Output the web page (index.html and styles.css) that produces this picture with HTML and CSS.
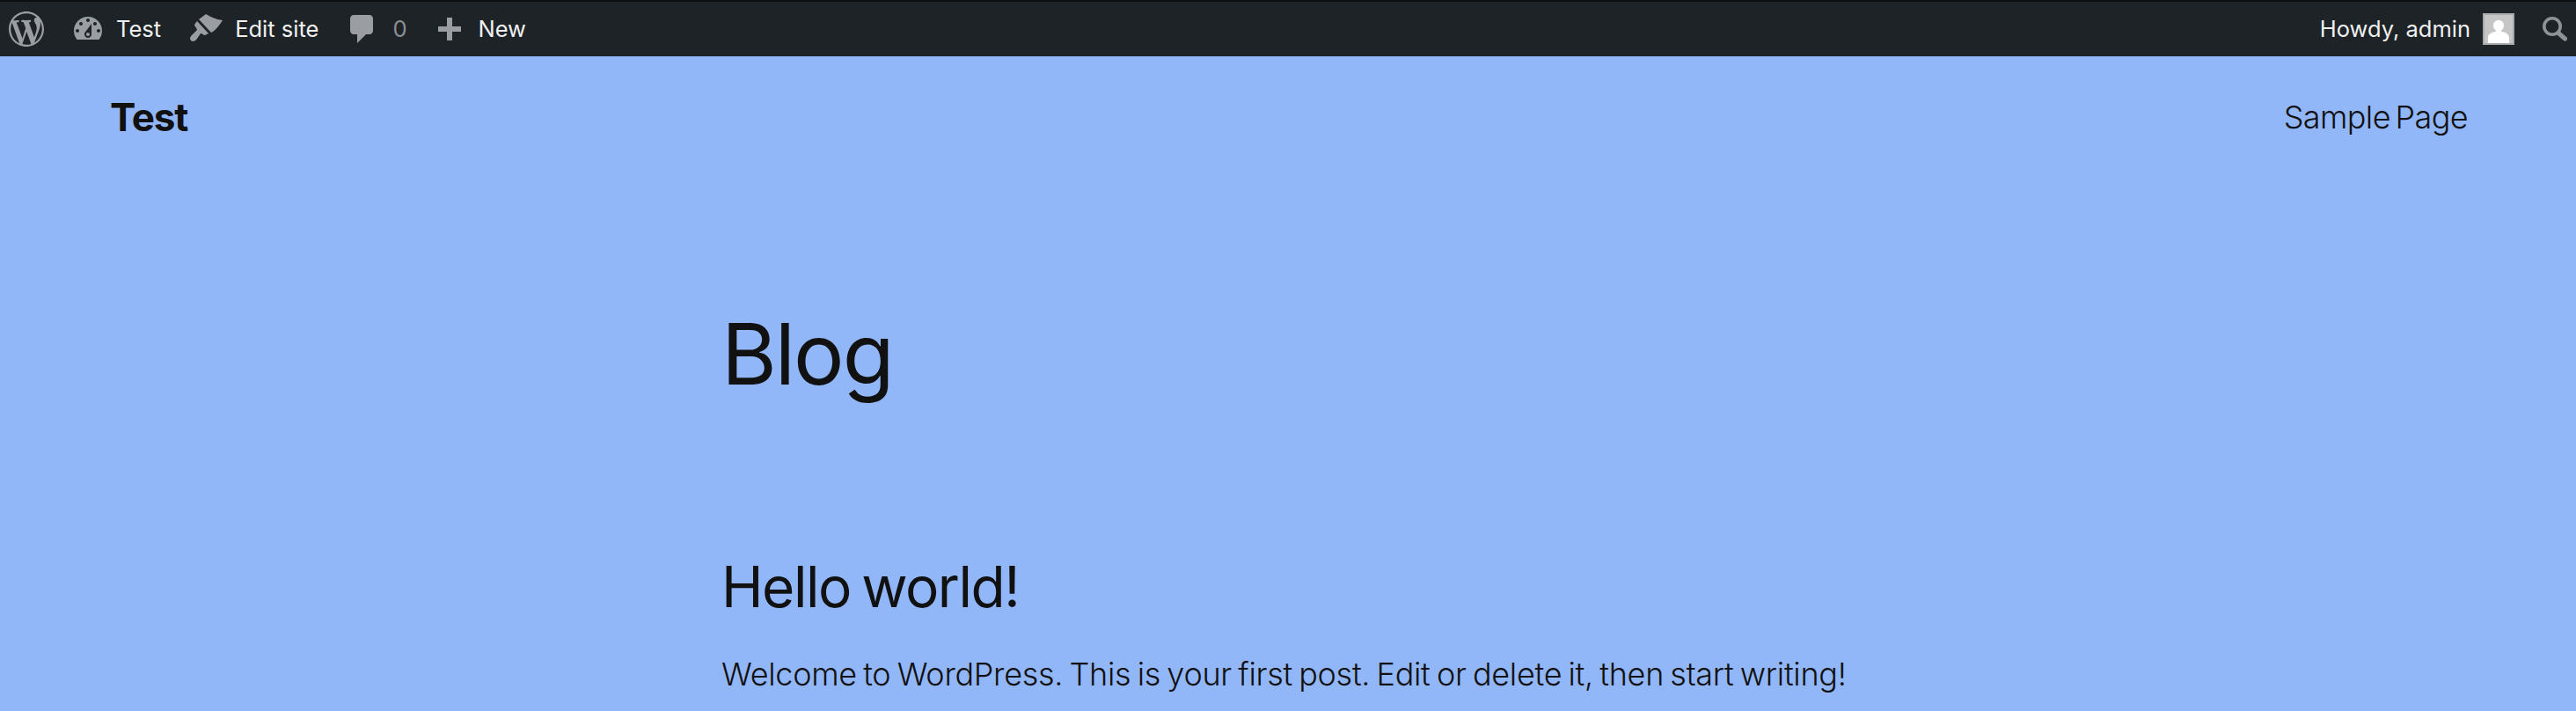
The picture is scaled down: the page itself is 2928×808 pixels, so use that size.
FILE: index.html
```html
<!DOCTYPE html>
<html lang="en">

<head>
    <meta charset="UTF-8">
    <meta name="viewport" content="width=device-width, initial-scale=1.0">
    <title>Blog</title>
    <link rel="stylesheet" href="styles.css">
</head>

<body>
    <div class="admin_bar">
        <ul class="bar_left">
            <li class="bar_item logo">
                <svg class="icon icon_logo" viewBox="0 0 20 20"><path d="M20 10c0-5.51-4.49-10-10-10C4.48 0 0 4.49 0 10c0 5.52 4.48 10 10 10 5.51 0 10-4.48 10-10zM7.78 15.37L4.37 6.22c.55-.02 1.17-.08 1.17-.08.5-.06.44-1.13-.06-1.11 0 0-1.45.11-2.37.11-.18 0-.37 0-.58-.01C4.12 2.69 6.87 1.11 10 1.11c2.33 0 4.45.87 6.05 2.34-.68-.11-1.65.39-1.65 1.58 0 .74.45 1.36.9 2.1.35.61.55 1.36.55 2.46 0 1.49-1.4 5-1.4 5l-3.03-8.37c.54-.02.82-.17.82-.17.5-.05.44-1.25-.06-1.22 0 0-1.44.12-2.38.12-.87 0-2.33-.12-2.33-.12-.5-.03-.56 1.2-.06 1.22l.92.08 1.26 3.41zM17.41 10c.24-.64.74-1.87.43-4.25.7 1.29 1.05 2.71 1.05 4.25 0 3.29-1.73 6.24-4.4 7.78.97-2.59 1.94-5.2 2.92-7.78zM6.1 18.09C3.12 16.65 1.11 13.53 1.11 10c0-1.3.23-2.48.72-3.59C3.25 10.3 4.67 14.2 6.1 18.09zm4.03-6.63l2.58 6.98c-.86.29-1.76.45-2.71.45-.79 0-1.57-.11-2.29-.33.81-2.38 1.62-4.74 2.42-7.1z"/></svg>
            </li>
            <li class="bar_item site">
                <svg class="icon" viewBox="0 0 20 20"><path d="M3.76 16h12.48c1.1-1.37 1.76-3.11 1.76-5 0-4.42-3.58-8-8-8s-8 3.58-8 8c0 1.89.66 3.63 1.76 5zM10 4c.55 0 1 .45 1 1s-.45 1-1 1-1-.45-1-1 .45-1 1-1zM6 6c.55 0 1 .45 1 1s-.45 1-1 1-1-.45-1-1 .45-1 1-1zm8 0c.55 0 1 .45 1 1s-.45 1-1 1-1-.45-1-1 .45-1 1-1zm-5.37 5.55L12 7v6c0 1.1-.9 2-2 2s-2-.9-2-2c0-.57.24-1.08.63-1.45zM4 10c.55 0 1 .45 1 1s-.45 1-1 1-1-.45-1-1 .45-1 1-1zm12 0c.55 0 1 .45 1 1s-.45 1-1 1-1-.45-1-1 .45-1 1-1zm-5 3c0-.55-.45-1-1-1s-1 .45-1 1 .45 1 1 1 1-.45 1-1z"/></svg>
                <span>Test</span>
            </li>
            <li class="bar_item edit">
                <svg class="icon" viewBox="0 0 40 40"><path d="M11 9L19 3C24 6 30 9 38 10C35 15 31 20 27 23L25 24Z"/><path d="M9 11L22 25L18 27C16 27 15 25 13 25L9 31C7 34 4 35 2 33C0 31 1 29 3 27L9 21C9 19 6 17 6 15Z"/></svg>
                <span>Edit site</span>
            </li>
            <li class="bar_item comments">
                <svg class="icon" viewBox="0 0 20 20"><path d="M5 2h9c1.1 0 2 .9 2 2v7c0 1.1-.9 2-2 2h-2l-5 5v-5H5c-1.1 0-2-.9-2-2V4c0-1.1.9-2 2-2z"/></svg>
                <span class="count">0</span>
            </li>
            <li class="bar_item new">
                <svg class="icon icon_plus" viewBox="0 0 20 20"><path d="M17 7v3h-5v5H9v-5H4V7h5V2h3v5h5z"/></svg>
                <span>New</span>
            </li>
        </ul>
        <ul class="bar_right">
            <li class="bar_item howdy">
                <span>Howdy, admin</span>
                <svg class="avatar" viewBox="0 0 36 36">
                    <rect width="36" height="36" fill="#a7aaad"/>
                    <rect x="2" y="2" width="32" height="32" fill="#c6c6c6"/>
                    <path fill="#fff" d="M18 8c-3.500 0-6 2.600-6 6 0 2.500 1.100 4.400 3 5.600v1.200c-5 1-9 3-9 7.200V34h24v-6c0-4.200-4-6.200-9-7.200v-1.200c1.900-1.200 3-3.100 3-5.600 0-3.400-2.500-6-6-6z"/>
                </svg>
            </li>
            <li class="bar_item search">
                <svg class="icon_search" viewBox="0 0 28 28"><circle cx="11" cy="11" r="9.200" fill="none" stroke="#8f9397" stroke-width="3.600"/><path d="M18 18.500l7.500 6.500" stroke="#8f9397" stroke-width="5" stroke-linecap="round"/></svg>
            </li>
        </ul>
    </div>

    <header class="site_header">
        <a class="site_title">Test</a>
        <a class="nav_link">Sample Page</a>
    </header>

    <main class="content">
        <h1 class="page_title">Blog</h1>
        <h2 class="post_title">Hello world!</h2>
        <p class="post_text">Welcome to WordPress. This is your first post. Edit or delete it, then start writing!</p>
    </main>
</body>

</html>
```

FILE: styles.css
```css
* {
    margin: 0;
    padding: 0;
    box-sizing: border-box;
}

html,
body {
    height: 808px;
    overflow: hidden;
}

body {
    background: #91b7f9;
    color: #111;
    font-family: Inter, "Liberation Sans", sans-serif;
}

ul {
    list-style: none;
}

.admin_bar {
    height: 64px;
    background: #1d2327;
    border-top: 2px solid #0c0e10;
    display: flex;
    justify-content: space-between;
    align-items: center;
    color: #f0f0f1;
    font-size: 25.5px;
}

.bar_left,
.bar_right,
.bar_item {
    display: flex;
    align-items: center;
}

.bar_item span {
    margin-bottom: 2px;
}

.bar_left {
    padding-left: 10px;
}

.icon {
    width: 40px;
    height: 40px;
    fill: #9a9ea3;
}

.icon_plus {
    margin-top: 6px;
}

.logo {
    margin-right: 30px;
}

.site {
    gap: 12px;
    margin-right: 32px;
}

.edit {
    gap: 12px;
    margin-right: 30px;
}

.comments {
    gap: 14px;
    margin-right: 28px;
}

.count {
    color: #8c8f94;
}

.new {
    gap: 13px;
}

.howdy {
    gap: 14px;
}

.avatar {
    width: 36px;
    height: 36px;
}

.search {
    margin: 0 10px 0 32px;
}

.icon_search {
    width: 28px;
    height: 28px;
}

.site_header {
    display: flex;
    justify-content: space-between;
    align-items: center;
    padding: 42px 123px 0 125px;
}

.site_title {
    font-size: 44px;
    font-weight: 700;
    letter-spacing: -1.2px;
}

.nav_link {
    font-size: 36px;
    font-weight: 300;
    letter-spacing: -0.6px;
    word-spacing: -4px;
}

.content {
    padding-left: 820px;
}

.page_title {
    font-size: 96px;
    font-weight: 400;
    letter-spacing: -2px;
    margin-top: 184px;
}

.post_title {
    font-size: 64px;
    font-weight: 400;
    letter-spacing: -1.5px;
    word-spacing: -4px;
    margin-top: 168px;
}

.post_text {
    font-size: 36px;
    font-weight: 300;
    letter-spacing: -0.3px;
    word-spacing: -2.5px;
    margin-top: 39px;
}
```
